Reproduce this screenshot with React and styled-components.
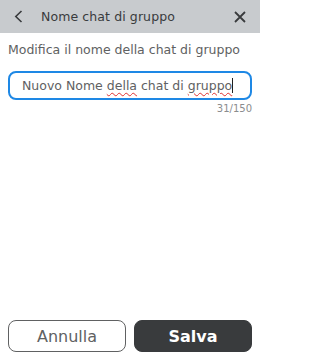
import React from "react";
import styled, { createGlobalStyle } from "styled-components";

const GlobalStyle = createGlobalStyle`
  html, body {
    margin: 0;
    padding: 0;
    background: #ffffff;
  }
  body {
    font-family: "DejaVu Sans", "Liberation Sans", sans-serif;
  }
`;

const Page = styled.div`
  display: flex;
  flex-direction: column;
  height: 358px;
  width: 260px;
  background: #ffffff;
`;

const Header = styled.div`
  display: flex;
  align-items: center;
  height: 33px;
  padding: 0 12px 0 10px;
  background: #c8cbce;
  color: #393b3d;
`;

const IconButton = styled.button`
  display: grid;
  place-items: center;
  width: 16px;
  height: 16px;
  padding: 0;
  border: none;
  background: none;
  color: #393b3d;
`;

const Title = styled.h1`
  flex: 1;
  margin: 0 0 0 15px;
  font-size: 12.5px;
  font-weight: 400;
  letter-spacing: 0.1px;
`;

const Body = styled.div`
  flex: 1;
  display: flex;
  flex-direction: column;
  padding: 0 8px;
`;

const Description = styled.p`
  margin: 9px 0 0 0;
  font-size: 12.5px;
  line-height: 15px;
  color: #606162;
`;

const Field = styled.div`
  display: flex;
  align-items: center;
  margin-top: 14px;
  height: 29px;
  box-sizing: border-box;
  padding: 0 12px;
  border: 2px solid #1e88e5;
  border-radius: 8px;
  font-size: 12.5px;
  color: #606162;
  white-space: nowrap;
`;

const Misspelled = styled.span`
  text-decoration: underline wavy #e03030;
  text-decoration-thickness: 1px;
  text-underline-offset: 2px;
`;

const Caret = styled.span`
  display: inline-block;
  width: 1px;
  height: 15px;
  background: #202020;
  vertical-align: middle;
`;

const Counter = styled.div`
  margin-top: 3px;
  text-align: right;
  font-size: 10px;
  color: #8a8c8e;
`;

const Footer = styled.div`
  display: grid;
  grid-template-columns: 1fr 1fr;
  gap: 8px;
  padding: 0 8px 6px 8px;
`;

const Button = styled.button`
  height: 32px;
  border-radius: 8px;
  font-family: inherit;
  font-size: 16px;
  border: 1px solid ${(p) => (p.$primary ? "#393b3d" : "#606162")};
  background: ${(p) => (p.$primary ? "#393b3d" : "#ffffff")};
  color: ${(p) => (p.$primary ? "#ffffff" : "#606162")};
  font-weight: ${(p) => (p.$primary ? 700 : 400)};
`;

const ChevronLeft = () => (
  <svg width="9" height="13" viewBox="0 0 9 13" fill="none">
    <path d="M7.5 1 L1.8 6.5 L7.5 12" stroke="currentColor" strokeWidth="1.6" />
  </svg>
);

const Close = () => (
  <svg width="12" height="12" viewBox="0 0 12 12" fill="none">
    <path d="M1 1 L11 11 M11 1 L1 11" stroke="currentColor" strokeWidth="1.8" />
  </svg>
);

export default function App() {
  return (
    <Page>
      <GlobalStyle />
      <Header>
        <IconButton>
          <ChevronLeft />
        </IconButton>
        <Title>Nome chat di gruppo</Title>
        <IconButton>
          <Close />
        </IconButton>
      </Header>
      <Body>
        <Description>Modifica il nome della chat di gruppo</Description>
        <Field>
          <span>
            Nuovo Nome <Misspelled>della</Misspelled> chat di{" "}
            <Misspelled>gruppo</Misspelled>
          </span>
          <Caret />
        </Field>
        <Counter>31/150</Counter>
      </Body>
      <Footer>
        <Button>Annulla</Button>
        <Button $primary>Salva</Button>
      </Footer>
    </Page>
  );
}
